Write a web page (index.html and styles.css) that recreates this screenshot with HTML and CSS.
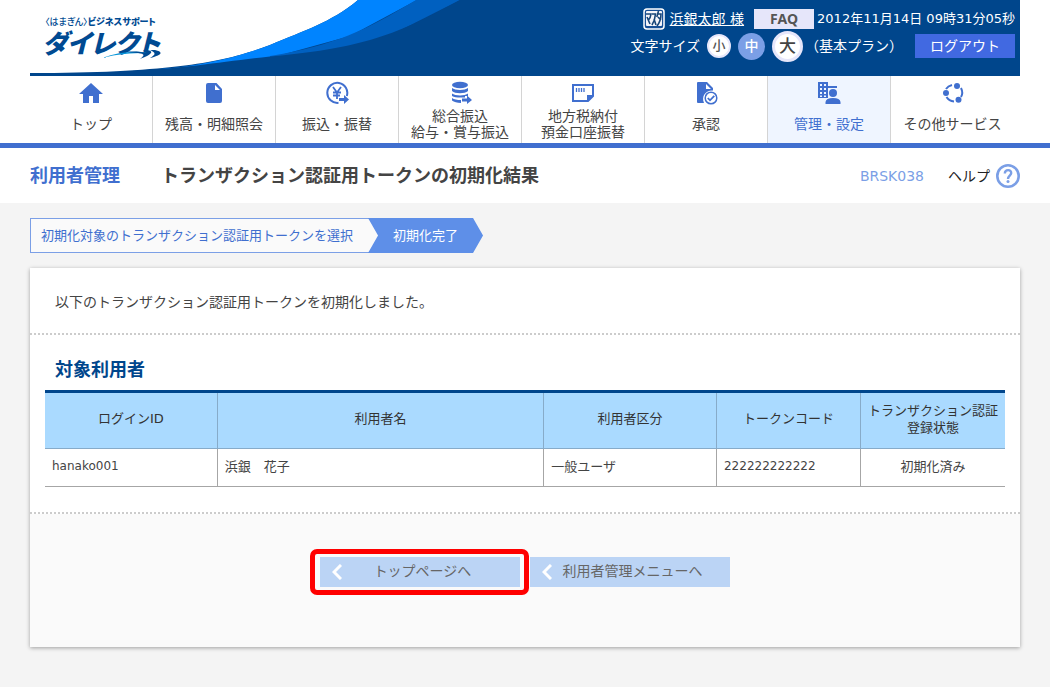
FILE: index.html
```
<!DOCTYPE html>
<html lang="ja">
<head>
<meta charset="utf-8">
<meta name="viewport" content="width=device-width, initial-scale=1">
<title>トランザクション認証用トークンの初期化結果</title>
<link rel="stylesheet" href="styles.css">
</head>
<body>
<div class="header-wrap">
<header class="header">
  <svg class="swoosh" viewBox="0 0 430 76" aria-hidden="true">
    <path fill="#fff" d="M0 0H328C300 23 275 30 240 45C200 60 150 73 0 73Z"/>
    <path fill="#0084ff" d="M328 0C300 23 275 30 240 45C205 58 170 66 130 69L150 72L240 58L320 36L387 0Z"/>
    <path fill="#0060c0" d="M386 0C335 31 305 45 240 56V62L347 42L430 0Z"/>
    <path fill="#00468c" d="M430 0C375 30 340 48 240 56.500C190 62 160 68 95 71.500L80 76H430Z"/>
  </svg>
  <a class="logo" href="#">
    <span class="logo-sub"><span class="logo-bank">〈はまぎん〉</span><span>ビジネスサポート</span></span>
    <span class="logo-main">ダイレクト</span>
    <svg class="logo-arrow" viewBox="0 0 60 12" aria-hidden="true">
      <path fill="#0795d8" d="M0 9C14 4 27 2 40 3L45 4C29 4 15 5 0 9Z"/>
      <path fill="#004a92" d="M24 3C32 2 39 3 45 4L41 1H45C52 2 51 5 38 10C43 6 43 5 36 4Z"/>
      <path fill="#004a92" d="M48 1H53C62 3 60 6 48 9C54 5 54 4 48 1Z"/>
    </svg>
  </a>
  <div class="header-tools">
    <div class="tool-row">
      <svg class="master" viewBox="0 0 22 22" role="img" aria-label="マスタ">
        <rect x="1" y="1" width="20" height="20" rx="3" fill="#174f96" stroke="#fff" stroke-width="1.500"/>
        <path fill="#f5f5fa" d="M3 4Q3 3 4 3H18Q19 3 19 4V17Q19 18 18 18H4Q3 18 3 17Z"/>
        <g fill="none" stroke="#174578" stroke-width="1.600">
          <path d="M3 6H8Q7.500 10 5.500 12M4 9L7 16"/>
          <path d="M9 6H12.500Q12 12 9 17M11 11L13 17"/>
          <path d="M15.500 3L13.800 9M15 6H18Q18 13 14 18M15 9L18 12"/>
        </g>
      </svg>
      <a class="user" href="#">浜銀太郎 様</a>
      <a class="faq" href="#">FAQ</a>
      <time class="clock">2012年11月14日 09時31分05秒</time>
    </div>
    <div class="tool-row">
      <span class="size-label">文字サイズ</span>
      <button class="size size-s" type="button">小</button>
      <button class="size size-m" type="button">中</button>
      <button class="size size-l" type="button">大</button>
      <span class="plan">（基本プラン）</span>
      <button class="logout" type="button">ログアウト</button>
    </div>
  </div>
</header>
</div>

<nav class="nav">
  <div class="nav-list">
    <a class="nav-item" href="#">
      <svg class="nav-icon" viewBox="0 0 24 24" aria-hidden="true"><path fill="currentColor" d="M12 2L0 13H4V22H10V15H14V22H20V13H24Z"/></svg>
      <span class="nav-text">トップ</span>
    </a>
    <a class="nav-item" href="#">
      <svg class="nav-icon" viewBox="0 0 24 24" aria-hidden="true"><path fill="currentColor" d="M6 2H14.500L20 8V20Q20 22 18 22H6Q4 22 4 20V4Q4 2 6 2ZM13 4V9H18Z"/></svg>
      <span class="nav-text">残高・明細照会</span>
    </a>
    <a class="nav-item" href="#">
      <svg class="nav-icon" viewBox="0 0 24 24" aria-hidden="true"><g fill="none" stroke="currentColor" stroke-width="2"><path d="M13.500 21.800A10 10 0 1 1 21.800 15"/><path stroke-width="1.800" d="M8 6L12 11.500L16 6M12 11V18M8 11.500H16M8 14.500H15"/></g><path fill="currentColor" d="M14 17H19V14L24 18.500L19 23V20H14Z"/></svg>
      <span class="nav-text">振込・振替</span>
    </a>
    <a class="nav-item" href="#">
      <svg class="nav-icon" viewBox="0 0 24 24" aria-hidden="true"><g fill="currentColor"><ellipse cx="12" cy="4" rx="8" ry="3.200"/><path d="M4 7C7 9.500 17 9.500 20 7V10C17 13 7 13 4 10ZM4 12.500C7 15 17 15 20 12.500V15H17V16.500H12C9 16.500 6 16 4 15ZM4 17C6 18.500 9 19 13 19V22C9 22 6 21 4 19.500Z"/><path d="M14 17.500H19V14.500L24 19L19 23V20.500H14Z"/></g></svg>
      <span class="nav-text">総合振込<br>給与・賞与振込</span>
    </a>
    <a class="nav-item" href="#">
      <svg class="nav-icon" viewBox="0 0 24 24" aria-hidden="true"><path fill="none" stroke="currentColor" stroke-width="2" d="M2 4H22V15L17 20H2Z"/><path fill="currentColor" d="M16 21V14H23Z"/><path fill="none" stroke="currentColor" stroke-width="1.300" d="M5.500 7V11M8 7V11M10.500 7V11M13 7V11"/></svg>
      <span class="nav-text">地方税納付<br>預金口座振替</span>
    </a>
    <a class="nav-item" href="#">
      <svg class="nav-icon" viewBox="0 0 24 24" aria-hidden="true"><path fill="currentColor" d="M4 1H13L19 7V9.500C12 9 7 15 10 22H4Q3 22 3 21V2Q3 1 4 1ZM12 3V8H17Z"/><circle cx="17" cy="17" r="5.800" fill="#fff" stroke="currentColor" stroke-width="1.500"/><path fill="none" stroke="currentColor" stroke-width="1.800" d="M13.800 17L16 19.300L20.300 14.800"/></svg>
      <span class="nav-text">承認</span>
    </a>
    <a class="nav-item nav-current" href="#" aria-current="page">
      <svg class="nav-icon" viewBox="0 0 24 24" aria-hidden="true"><g fill="currentColor"><path fill-rule="evenodd" d="M1 1H11V5H20V7H11V17H1ZM3 3V5H5V3ZM7 3V5H9V3ZM3 7V9H5V7ZM7 7V9H9V7ZM3 11V13H5V11ZM7 11V13H9V11ZM3 14.500V16H5V14.500ZM7 14.500V16H9V14.500Z"/><circle cx="16" cy="12" r="4"/><path d="M8.500 23V21Q9 17 16 17T23.500 21V23Z"/></g></svg>
      <span class="nav-text">管理・設定</span>
    </a>
    <a class="nav-item" href="#">
      <svg class="nav-icon" viewBox="0 0 24 24" aria-hidden="true"><path fill="none" stroke="currentColor" stroke-width="2" d="M5 8Q7 5 11 4M20 7Q22.500 12 20 16M5.500 16Q8 20 13 20.500"/><g fill="currentColor"><circle cx="16" cy="5" r="3"/><circle cx="5" cy="12" r="3"/><circle cx="17.500" cy="18.800" r="3"/></g></svg>
      <span class="nav-text">その他サービス</span>
    </a>
  </div>
</nav>

<div class="title-bar">
  <span class="category">利用者管理</span>
  <h1 class="title">トランザクション認証用トークンの初期化結果</h1>
  <span class="screen-id">BRSK038</span>
  <a class="help" href="#">ヘルプ
    <svg class="help-icon" viewBox="0 0 24 24" aria-hidden="true"><g fill="none" stroke="#7b9fe6"><circle cx="12" cy="12" r="10.700" stroke-width="2.600"/><path stroke-width="2.400" d="M8.800 9.500C9 5 15.500 5.200 15.200 9.200C15 11.600 12 11.800 12 15"/></g><circle cx="12" cy="17.600" r="1.500" fill="#7b9fe6"/></svg>
  </a>
</div>

<main class="main">
  <ol class="steps">
    <li class="step">初期化対象のトランザクション認証用トークンを選択</li>
    <li class="step step-current" aria-current="step">初期化完了</li>
  </ol>

  <div class="card">
    <p class="message">以下のトランザクション認証用トークンを初期化しました。</p>
    <section class="users">
      <h2 class="heading">対象利用者</h2>
      <table class="table">
        <colgroup><col class="col-id"><col class="col-name"><col class="col-type"><col class="col-code"><col class="col-state"></colgroup>
        <thead>
          <tr><th scope="col">ログインID</th><th scope="col">利用者名</th><th scope="col">利用者区分</th><th scope="col">トークンコード</th><th scope="col">トランザクション認証<br>登録状態</th></tr>
        </thead>
        <tbody>
          <tr><td class="latin">hanako001</td><td>浜銀　花子</td><td>一般ユーザ</td><td class="latin">222222222222</td><td class="center">初期化済み</td></tr>
        </tbody>
      </table>
    </section>
    <div class="actions">
      <button class="back back-marked" type="button"><svg class="chevron" viewBox="0 0 10 16" aria-hidden="true"><path fill="none" stroke="#fff" stroke-width="3" d="M9 1L2 8L9 15"/></svg>トップページへ</button>
      <button class="back" type="button"><svg class="chevron" viewBox="0 0 10 16" aria-hidden="true"><path fill="none" stroke="#fff" stroke-width="3" d="M9 1L2 8L9 15"/></svg>利用者管理メニューへ</button>
    </div>
  </div>
</main>
</body>
</html>
```

FILE: styles.css
```
* {
  box-sizing: border-box;
}

body {
  margin: 0;
  background: #f4f4f4;
  color: #444;
  font-family: "DejaVu Sans", "Noto Sans CJK JP", sans-serif;
  font-size: 14px;
  line-height: 20px;
}

a {
  color: inherit;
  text-decoration: none;
}

button {
  margin: 0;
  padding: 0;
  border: 0;
  font: inherit;
  cursor: pointer;
}

/* Header */
.header-wrap {
  padding: 0 30px;
  background: #fff;
}

.header {
  position: relative;
  display: flex;
  justify-content: space-between;
  height: 76px;
  padding: 0 5px 0 12px;
  background: #00468c;
}

.swoosh {
  position: absolute;
  top: 0;
  left: 0;
  width: 430px;
  height: 76px;
}

.logo {
  position: relative;
  display: flex;
  flex-direction: column;
  padding-top: 15px;
  color: #004a92;
  font-family: "Noto Sans CJK JP", sans-serif;
  font-feature-settings: "palt";
  font-weight: 900;
}

.logo-sub {
  display: flex;
  padding-left: 3px;
  font-size: 9px;
  line-height: 14px;
}

.logo-bank {
  font-weight: 500;
}

.logo-main {
  font-size: 26px;
  font-style: italic;
  line-height: 26px;
}

.logo-arrow {
  position: absolute;
  top: 49px;
  left: 60px;
  width: 60px;
  height: 12px;
}

.header-tools {
  position: relative;
  display: flex;
  flex-direction: column;
  gap: 1px;
  padding-top: 8px;
  color: #fff;
}

.tool-row {
  display: flex;
  align-items: center;
  justify-content: flex-end;
  height: 22px;
}

.tool-row + .tool-row {
  height: 30px;
}

.master {
  width: 22px;
  height: 22px;
  margin-right: 5px;
}

.user {
  margin-right: 10px;
  text-decoration: underline;
}

.faq {
  width: 60px;
  margin-right: 3px;
  background: #e6e6fa;
  color: #555;
  font-family: "Noto Sans", sans-serif;
  font-weight: bold;
  text-align: center;
}

.clock {
  font-size: 13px;
}

.size-label {
  margin-right: 7px;
}

.size {
  border-radius: 50%;
  font-weight: 500;
  text-align: center;
}

.size-s {
  width: 24px;
  height: 24px;
  margin-right: 7px;
  border: 2px solid #e6e6fa;
  background: #fff;
  color: #555;
  font-size: 13px;
  line-height: 18px;
}

.size-m {
  width: 27px;
  height: 27px;
  margin-right: 7px;
  background: #7b9fe6;
  color: #fff;
}

.size-l {
  width: 31px;
  height: 31px;
  border: 3px solid #e6e6fa;
  background: #fff;
  color: #444;
  font-size: 17px;
}

.plan {
  margin-left: 2px;
}

.logout {
  width: 100px;
  height: 24px;
  margin-left: 12px;
  background: #4169e1;
  color: #fff;
}

/* Global navigation */
.nav {
  padding: 0 30px;
  border-bottom: 5px solid #406fcf;
  background: #fff;
}

.nav-list {
  display: grid;
  grid-template-columns: repeat(8, 1fr);
  height: 67px;
  padding-right: 6px;
}

.nav-item {
  display: flex;
  flex-direction: column;
  align-items: center;
  padding-top: 5px;
  border-right: 1px solid #d4d4d4;
}

.nav-item:last-child {
  border-right: 0;
}

.nav-current {
  background: #eff5ff;
  color: #406fcf;
}

.nav-icon {
  flex: none;
  width: 24px;
  height: 24px;
  color: #406fcf;
}

.nav-text {
  display: flex;
  flex: 1;
  flex-direction: column;
  justify-content: center;
  line-height: 16px;
  text-align: center;
  white-space: nowrap;
}

/* Page title */
.title-bar {
  display: flex;
  align-items: center;
  height: 55px;
  padding: 0 30px;
  background: #fff;
}

.category {
  color: #406fcf;
  font-size: 18px;
  font-weight: bold;
}

.title {
  margin: 0 auto 0 41px;
  font-size: 18px;
  font-weight: bold;
}

.screen-id {
  margin-right: 24px;
  color: #7b9fe6;
}

.help {
  display: flex;
  align-items: center;
  gap: 6px;
  color: #222;
}

.help-icon {
  width: 24px;
  height: 24px;
}

/* Steps */
.main {
  padding: 15px 30px 40px;
}

.steps {
  display: flex;
  margin: 0 0 15px;
  padding: 0;
  font-size: 13px;
  line-height: 33px;
  list-style: none;
}

.step {
  padding: 0 25px 0 10px;
  border: 1px solid #7b9fe6;
  border-right: 0;
  background: #fafafa;
  color: #406fcf;
}

.step-current {
  margin-left: -10px;
  padding: 0 25px;
  border: 0;
  background: #5e8fe8;
  clip-path: polygon(0 0, calc(100% - 10px) 0, 100% 50%, calc(100% - 10px) 100%, 0 100%, 10px 50%);
  color: #fff;
  line-height: 35px;
}

/* Card */
.card {
  background: #fff;
  box-shadow: 0 1px 4px rgba(0, 0, 0, 0.35);
}

.message {
  margin: 0;
  padding: 24px 25px 21px;
  border-bottom: 2px dotted #ccc;
}

.users {
  padding: 25px 15px;
  border-bottom: 2px dotted #ccc;
}

.heading {
  margin: 0 10px 10px;
  color: #00468c;
  font-size: 18px;
  font-weight: bold;
  line-height: 20px;
}

.table {
  width: 100%;
  border-top: 3px solid #00468c;
  border-spacing: 0;
  font-size: 13px;
  line-height: 17px;
  table-layout: fixed;
}

.col-id,
.col-type {
  width: 18%;
}

.col-name {
  width: 34%;
}

.col-code,
.col-state {
  width: 15%;
}

.table th {
  height: 56px;
  padding: 0 0 4px;
  border-right: 1px solid #87abc9;
  border-bottom: 1px solid #87abc9;
  background: #aadaff;
  color: #333;
  font-weight: normal;
}

.table td {
  height: 38px;
  padding: 0 7px 3px;
  border-right: 1px solid #a6a6a6;
  border-bottom: 1px solid #a6a6a6;
}

.table th:last-child,
.table td:last-child {
  border-right: 0;
}

.table .latin {
  font-size: 12px;
}

.table .center {
  text-align: center;
}

.actions {
  display: flex;
  justify-content: center;
  gap: 10px;
  padding: 43px 0 60px;
  background: #fafafa;
}

.back {
  position: relative;
  width: 200px;
  height: 30px;
  padding: 0 0 3px 5px;
  background: #bbd4f5;
  color: #666;
}

.chevron {
  position: absolute;
  top: 7px;
  left: 12px;
  width: 10px;
  height: 16px;
}

.back-marked::after {
  position: absolute;
  inset: -8px -9px -8px -10px;
  border: 5px solid #f00;
  border-radius: 7px;
  content: "";
}
```
